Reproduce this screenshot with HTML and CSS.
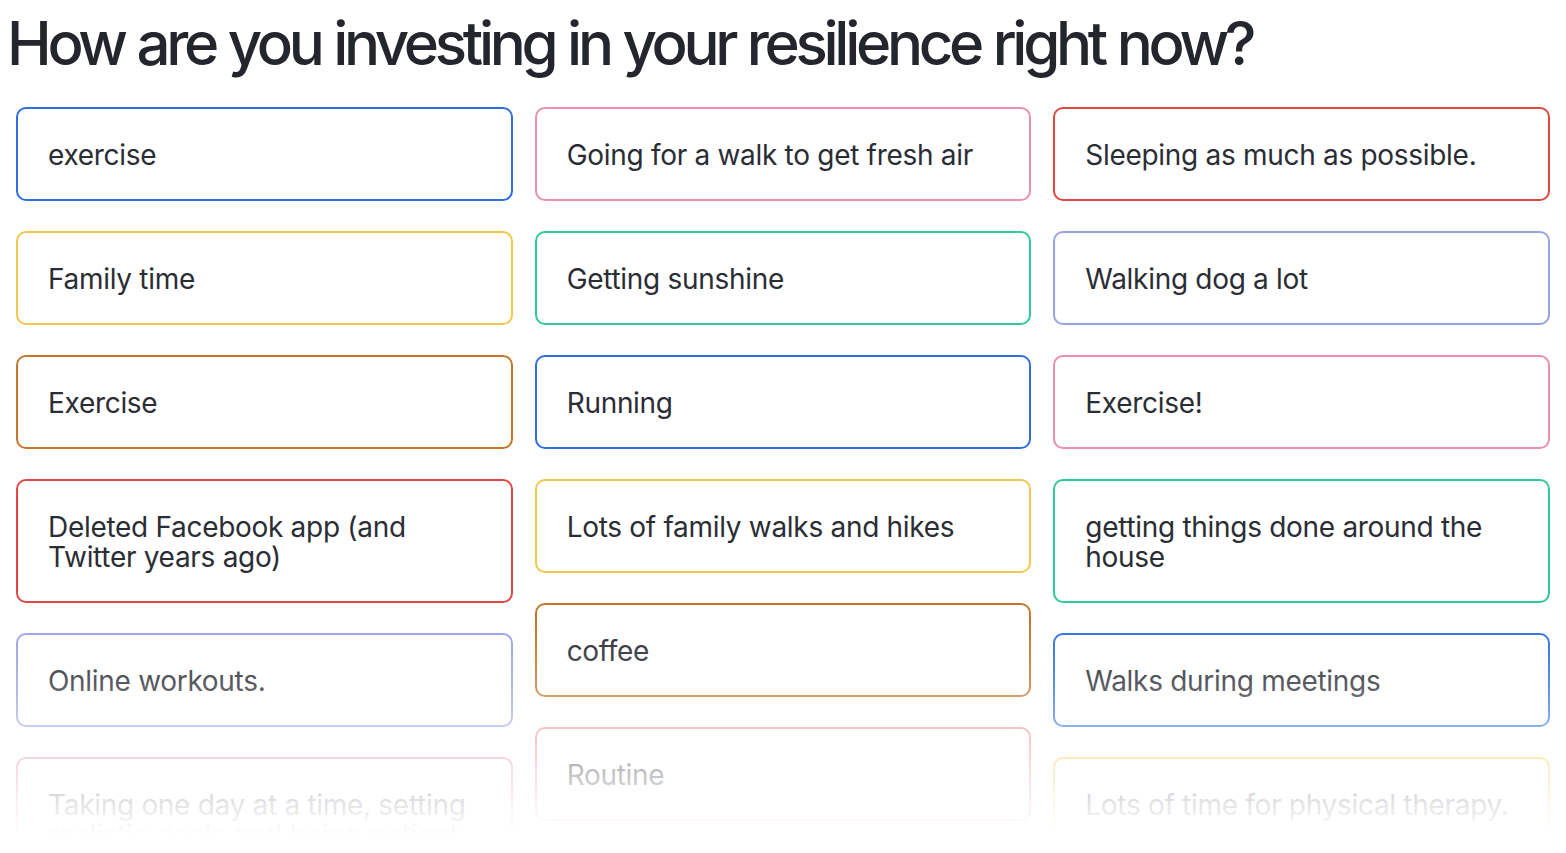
FILE: index.html
```html
<!DOCTYPE html>
<html>
<head>
    <meta charset="UTF-8">
    <title>Resilience - Word Wall</title>
    <link rel="stylesheet" href="styles.css">
</head>
<body>
    <div class="slide">
        <h1 class="question">How are you investing in your resilience right now?</h1>
        <div class="wall">
            <div class="column">
                <div class="answer blue">exercise</div>
                <div class="answer yellow">Family time</div>
                <div class="answer brown">Exercise</div>
                <div class="answer red">Deleted Facebook app (and Twitter years ago)</div>
                <div class="answer lavender">Online workouts.</div>
                <div class="answer pink">Taking one day at a time, setting realistic goals and being patient</div>
            </div>
            <div class="column">
                <div class="answer pink">Going for a walk to get fresh air</div>
                <div class="answer green">Getting sunshine</div>
                <div class="answer blue">Running</div>
                <div class="answer yellow">Lots of family walks and hikes</div>
                <div class="answer brown">coffee</div>
                <div class="answer rose">Routine</div>
            </div>
            <div class="column">
                <div class="answer red">Sleeping as much as possible.</div>
                <div class="answer lavender">Walking dog a lot</div>
                <div class="answer pink">Exercise!</div>
                <div class="answer green">getting things done around the house</div>
                <div class="answer blue">Walks during meetings</div>
                <div class="answer yellow">Lots of time for physical therapy.</div>
            </div>
            <div class="fade"></div>
        </div>
    </div>
</body>
</html>
```

FILE: styles.css
```css
body {
    margin: 0;
    background: #fff;
    font-family: Inter, "Noto Sans", sans-serif;
    color: #2b2d35;
}

.slide {
    height: 853px;
    overflow: hidden;
}

.question {
    margin: 0;
    padding: 8px 0 0 7px;
    font-size: 60px;
    font-weight: 500;
    line-height: 70px;
    letter-spacing: -4.3px;
    word-spacing: 1px;
    color: #24262d;
}

.wall {
    position: relative;
    display: grid;
    grid-template-columns: repeat(3, 1fr);
    column-gap: 22px;
    margin: 29px 16px 0 16px;
    height: 728px;
    overflow: hidden;
}

.column {
    display: flex;
    flex-direction: column;
    gap: 30px;
}

.answer {
    border: 2px solid #ccc;
    border-radius: 10px;
    padding: 31px 30px 29px;
    font-size: 28px;
    line-height: 30px;
    letter-spacing: -0.3px;
}

.answer.blue { border-color: #2f6fdc; }
.answer.yellow { border-color: #f4c84f; }
.answer.brown { border-color: #c5772c; }
.answer.red { border-color: #de4841; }
.answer.lavender { border-color: #9aa3e1; }
.answer.pink { border-color: #ea8fac; }
.answer.green { border-color: #2fc99b; }
.answer.rose { border-color: #ee8f96; }

/* white fade over the lower answers */
.fade {
    position: absolute;
    left: 0;
    right: 0;
    bottom: 0;
    height: 215px;
    background: linear-gradient(to bottom,
        rgba(255, 255, 255, 0) 0,
        rgba(255, 255, 255, 0.2) 60px,
        rgba(255, 255, 255, 0.72) 155px,
        rgba(255, 255, 255, 0.88) 185px,
        #fff 215px);
    pointer-events: none;
}
```
